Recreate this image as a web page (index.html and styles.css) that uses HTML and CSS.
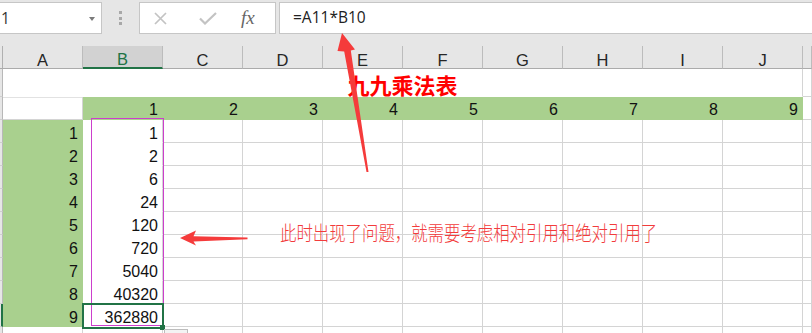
FILE: index.html
```html
<!DOCTYPE html>
<html>
<head>
<meta charset="utf-8">
<link rel="stylesheet" href="styles.css">
</head>
<body>
<div class="app">
  <div class="toolbar">
    <div class="namebox"><span class="nb-text">1</span><span class="caret"></span></div>
    <div class="grip"><i></i><i></i><i></i></div>
    <div class="fnbox">
      <svg class="ic-x" width="13" height="13" viewBox="0 0 13 13"><path d="M1 1 L12 12 M12 1 L1 12" stroke="#c3c3c3" stroke-width="1.7" fill="none"/></svg>
      <svg class="ic-ok" width="18" height="13" viewBox="0 0 18 13"><path d="M1 6.5 L6 11.5 L17 1" stroke="#c3c3c3" stroke-width="2.2" fill="none"/></svg>
      <span class="fx">fx</span>
    </div>
    <div class="formula">=A11*B10</div>
  </div>

  <div class="sheet">
    <div class="hd hs"></div>
    <div class="hd">A</div><div class="hd sel">B</div><div class="hd">C</div><div class="hd">D</div><div class="hd">E</div>
    <div class="hd">F</div><div class="hd">G</div><div class="hd">H</div><div class="hd">I</div><div class="hd">J</div><div class="hd"></div>

    <div class="rh"></div><div class="c title">九九乘法表</div><div class="c"></div>

    <div class="rh"></div><div class="c a0"></div>
    <div class="c g gh">1</div><div class="c g gh">2</div><div class="c g gh">3</div><div class="c g gh">4</div><div class="c g gh">5</div>
    <div class="c g gh">6</div><div class="c g gh">7</div><div class="c g gh">8</div><div class="c g gh">9</div><div class="c"></div>

    <div class="rh"></div><div class="c g">1</div><div class="c w">1</div>
    <div class="c"></div><div class="c"></div><div class="c"></div><div class="c"></div><div class="c"></div><div class="c"></div><div class="c"></div><div class="c"></div><div class="c"></div>

    <div class="rh"></div><div class="c g">2</div><div class="c w">2</div>
    <div class="c"></div><div class="c"></div><div class="c"></div><div class="c"></div><div class="c"></div><div class="c"></div><div class="c"></div><div class="c"></div><div class="c"></div>

    <div class="rh"></div><div class="c g">3</div><div class="c w">6</div>
    <div class="c"></div><div class="c"></div><div class="c"></div><div class="c"></div><div class="c"></div><div class="c"></div><div class="c"></div><div class="c"></div><div class="c"></div>

    <div class="rh"></div><div class="c g">4</div><div class="c w">24</div>
    <div class="c"></div><div class="c"></div><div class="c"></div><div class="c"></div><div class="c"></div><div class="c"></div><div class="c"></div><div class="c"></div><div class="c"></div>

    <div class="rh"></div><div class="c g">5</div><div class="c w">120</div>
    <div class="c"></div><div class="c"></div><div class="c"></div><div class="c"></div><div class="c"></div><div class="c"></div><div class="c"></div><div class="c"></div><div class="c"></div>

    <div class="rh"></div><div class="c g">6</div><div class="c w">720</div>
    <div class="c"></div><div class="c"></div><div class="c"></div><div class="c"></div><div class="c"></div><div class="c"></div><div class="c"></div><div class="c"></div><div class="c"></div>

    <div class="rh"></div><div class="c g">7</div><div class="c w">5040</div>
    <div class="c"></div><div class="c"></div><div class="c"></div><div class="c"></div><div class="c"></div><div class="c"></div><div class="c"></div><div class="c"></div><div class="c"></div>

    <div class="rh"></div><div class="c g">8</div><div class="c w">40320</div>
    <div class="c"></div><div class="c"></div><div class="c"></div><div class="c"></div><div class="c"></div><div class="c"></div><div class="c"></div><div class="c"></div><div class="c"></div>

    <div class="rh rsel"></div><div class="c g">9</div><div class="c w">362880</div>
    <div class="c"></div><div class="c"></div><div class="c"></div><div class="c"></div><div class="c"></div><div class="c"></div><div class="c"></div><div class="c"></div><div class="c"></div>

    <div class="rh"></div><div class="c"></div><div class="c"></div>
    <div class="c"></div><div class="c"></div><div class="c"></div><div class="c"></div><div class="c"></div><div class="c"></div><div class="c"></div><div class="c"></div><div class="c"></div>
  </div>

  <div class="copy-range"></div>
  <div class="active-cell"></div>
  <div class="fill-handle"></div>
  <div class="paste-opt"></div>

  <svg class="arrows" width="812" height="333" viewBox="0 0 812 333">
    <path d="M342 33 L355 49.5 L350.8 50.5 L368.5 172 L366.5 172 L344.2 51.5 L337.5 51 Z" fill="#f53b3b"/>
    <path d="M180 238 L196 230.5 L193.5 236.2 L247.5 237.6 L247.5 239.2 L193.5 241.6 L196 245.5 Z" fill="#f53b3b"/>
  </svg>

  <div class="note">此时出现了问题，就需要考虑相对引用和绝对引用了</div>
</div>
</body>
</html>
```

FILE: styles.css
```css
* { box-sizing: border-box; }
html, body { margin: 0; padding: 0; }
body {
  width: 812px;
  height: 333px;
  overflow: hidden;
  background: #fff;
  font-family: "Liberation Sans", "Noto Sans CJK SC", sans-serif;
}
.app {
  position: relative;
  width: 812px;
  height: 333px;
  overflow: hidden;
}

/* ---------- toolbar ---------- */
.toolbar {
  height: 46px;
  background: #e6e6e6;
  display: flex;
  align-items: flex-start;
  padding-top: 2px;
}
.namebox {
  margin-left: -1px;
  width: 103px;
  height: 32px;
  background: #fff;
  border: 1px solid #c6c6c6;
  display: flex;
  align-items: center;
  justify-content: space-between;
  padding-left: 1px;
  padding-right: 6px;
}
.nb-text {
  font-family: "Open Sans", sans-serif;
  font-size: 15.5px;
  color: #333;
  line-height: 20px;
}
.caret {
  width: 0;
  height: 0;
  border-left: 3.5px solid transparent;
  border-right: 3.5px solid transparent;
  border-top: 4px solid #7a7a7a;
  margin-top: 1px;
}
.grip {
  width: 37px;
  height: 32px;
  display: flex;
  flex-direction: column;
  align-items: center;
  padding-top: 9px;
  gap: 2.5px;
}
.grip i {
  display: block;
  width: 3px;
  height: 3px;
  background: #a8a8a8;
}
.fnbox {
  width: 137px;
  height: 32px;
  background: #fff;
  border: 1px solid #c6c6c6;
  display: flex;
  align-items: center;
}
.ic-x { margin-left: 14px; }
.ic-ok { margin-left: 32px; }
.fx {
  margin-left: 24px;
  font-family: "Liberation Serif", "DejaVu Serif", serif;
  font-style: italic;
  font-size: 19px;
  color: #666;
  line-height: 20px;
  margin-top: -1px;
}
.formula {
  flex: 1;
  margin-left: 3px;
  margin-right: -1px;
  height: 32px;
  background: #fff;
  border: 1px solid #c6c6c6;
  padding-left: 13px;
  font-family: "Open Sans", sans-serif;
  font-size: 15.5px;
  color: #222;
  line-height: 28px;
}

/* ---------- sheet ---------- */
.sheet {
  display: grid;
  grid-template-columns: 3px repeat(10, 80px) 9px;
  grid-template-rows: 23px 28px 23px repeat(9, 23px) 23px;
}
.hd {
  background: #e6e6e6;
  border-right: 1px solid #bcbcbc;
  border-bottom: 1px solid #ababab;
  display: flex;
  align-items: flex-end;
  justify-content: center;
  font-size: 16.5px;
  line-height: 16px;
  color: #262626;
}
.hd.hs { border-right-color: #b0b0b0; }
.hd.sel {
  background: #d2d2d2;
  color: #217346;
  border-bottom: 2px solid #217346;
}
.rh {
  background: #e6e6e6;
  border-right: 1px solid #b8b8b8;
  border-bottom: 1px solid #cfcfcf;
}
.rh.rsel { border-right: 2px solid #217346; }

.c {
  border-right: 1px solid #d4d4d4;
  border-bottom: 1px solid #d4d4d4;
  display: flex;
  align-items: flex-end;
  justify-content: flex-end;
  padding-right: 4px;
  font-size: 16px;
  line-height: 16px;
  color: #111;
}
.c.title {
  grid-column: span 10;
  justify-content: center;
  padding-right: 0;
  border-bottom-color: #fff;
  font-family: "Noto Sans CJK SC", sans-serif;
  font-size: 22px;
  font-weight: 700;
  line-height: 24px;
  color: #ff0000;
}
.c.a0 { box-shadow: inset 0 1px 0 #e2e2e2; }
.c.g {
  background: #a9d08e;
  border-color: #a9d08e;
}
.c.gh { padding-bottom: 1px; }
.c.w {
  background: #fff;
  border-bottom-color: #fff;
}

/* ---------- overlays ---------- */
.copy-range {
  position: absolute;
  left: 91px;
  top: 118px;
  width: 73px;
  height: 208px;
  border: 1px solid #cc3fcc;
}
.active-cell {
  position: absolute;
  left: 82px;
  top: 303px;
  width: 82px;
  height: 26px;
  border: 2px solid #217346;
}
.fill-handle {
  position: absolute;
  left: 160px;
  top: 325px;
  width: 5px;
  height: 5px;
  background: #217346;
}
.paste-opt {
  position: absolute;
  left: 164px;
  top: 329px;
  width: 24px;
  height: 12px;
  background: #f3f3f3;
  border: 1px solid #bdbdbd;
}
.arrows {
  position: absolute;
  left: 0;
  top: 0;
}
.note {
  position: absolute;
  left: 280px;
  top: 222px;
  font-family: "Noto Sans CJK SC", sans-serif;
  font-size: 20px;
  font-weight: 300;
  line-height: 22px;
  color: #f23c3c;
  white-space: nowrap;
  transform: scaleX(0.82);
  transform-origin: 0 0;
}
```
